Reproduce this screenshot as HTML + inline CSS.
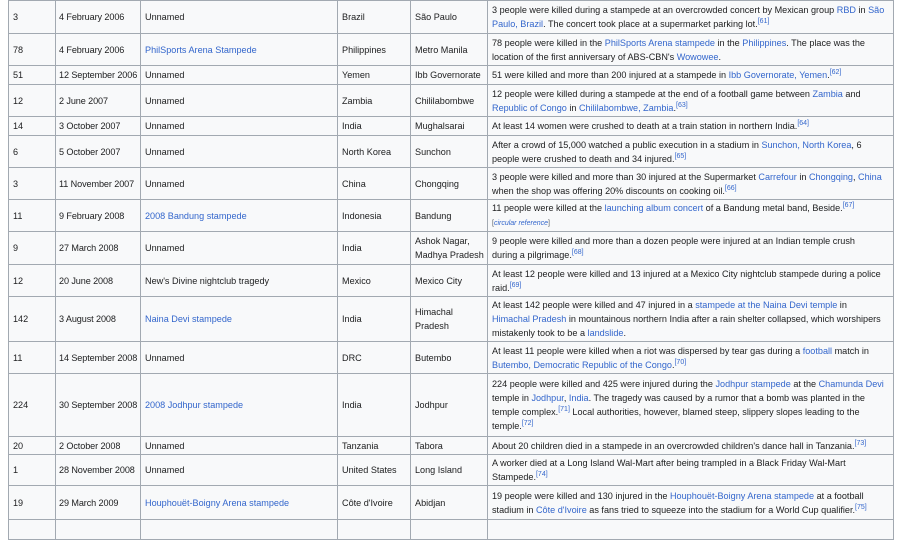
<!DOCTYPE html>
<html><head><meta charset="utf-8"><style>
body{margin:0;background:#fff;width:900px;height:522px;overflow:hidden;font-family:"Liberation Sans","Noto Sans CJK KR",sans-serif;font-size:9.1px;color:#202122}
table{position:absolute;left:8px;top:0;width:885px;border-collapse:collapse;table-layout:fixed;background:#f8f9fa}
td{border:1px solid #a2a9b1;padding:0 2px 0 4px;line-height:14px;white-space:nowrap;overflow:hidden;vertical-align:middle}
td:nth-child(2){padding:0 0 0 3px;letter-spacing:-0.1px}
a{color:#3366cc;text-decoration:none}
sup{font-size:7px;line-height:0;vertical-align:4px;color:#3366cc}
.cr{font-size:7px;color:#54595d}
</style></head><body>
<table>
<colgroup><col style="width:47px"><col style="width:85px"><col style="width:197px"><col style="width:73px"><col style="width:77px"><col style="width:406px"></colgroup>
<tr style="height:33px"><td>3</td><td>4 February 2006</td><td>Unnamed</td><td>Brazil</td><td>São Paulo</td><td>3 people were killed during a stampede at an overcrowded concert by Mexican group <a>RBD</a> in <a>São</a><br><a>Paulo, Brazil</a>. The concert took place at a supermarket parking lot.<sup>[61]</sup></td></tr>
<tr style="height:32px"><td>78</td><td>4 February 2006</td><td><a>PhilSports Arena Stampede</a></td><td>Philippines</td><td>Metro Manila</td><td>78 people were killed in the <a>PhilSports Arena stampede</a> in the <a>Philippines</a>. The place was the<br>location of the first anniversary of ABS-CBN's <a>Wowowee</a>.</td></tr>
<tr style="height:19px"><td>51</td><td>12 September 2006</td><td>Unnamed</td><td>Yemen</td><td>Ibb Governorate</td><td>51 were killed and more than 200 injured at a stampede in <a>Ibb Governorate, Yemen</a>.<sup>[62]</sup></td></tr>
<tr style="height:32px"><td>12</td><td>2 June 2007</td><td>Unnamed</td><td>Zambia</td><td>Chililabombwe</td><td>12 people were killed during a stampede at the end of a football game between <a>Zambia</a> and<br><a>Republic of Congo</a> in <a>Chililabombwe, Zambia</a>.<sup>[63]</sup></td></tr>
<tr style="height:19px"><td>14</td><td>3 October 2007</td><td>Unnamed</td><td>India</td><td>Mughalsarai</td><td>At least 14 women were crushed to death at a train station in northern India.<sup>[64]</sup></td></tr>
<tr style="height:32px"><td>6</td><td>5 October 2007</td><td>Unnamed</td><td>North Korea</td><td>Sunchon</td><td>After a crowd of 15,000 watched a public execution in a stadium in <a>Sunchon, North Korea</a>, 6<br>people were crushed to death and 34 injured.<sup>[65]</sup></td></tr>
<tr style="height:32px"><td>3</td><td>11 November 2007</td><td>Unnamed</td><td>China</td><td>Chongqing</td><td>3 people were killed and more than 30 injured at the Supermarket <a>Carrefour</a> in <a>Chongqing</a>, <a>China</a><br>when the shop was offering 20% discounts on cooking oil.<sup>[66]</sup></td></tr>
<tr style="height:32px"><td>11</td><td>9 February 2008</td><td><a>2008 Bandung stampede</a></td><td>Indonesia</td><td>Bandung</td><td>11 people were killed at the <a>launching album concert</a> of a Bandung metal band, Beside.<sup>[67]</sup><br><span class="cr">[<i><a>circular reference</a></i>]</span></td></tr>
<tr style="height:33px"><td>9</td><td>27 March 2008</td><td>Unnamed</td><td>India</td><td>Ashok Nagar,<br>Madhya Pradesh</td><td>9 people were killed and more than a dozen people were injured at an Indian temple crush<br>during a pilgrimage.<sup>[68]</sup></td></tr>
<tr style="height:32px"><td>12</td><td>20 June 2008</td><td>New's Divine nightclub tragedy</td><td>Mexico</td><td>Mexico City</td><td>At least 12 people were killed and 13 injured at a Mexico City nightclub stampede during a police<br>raid.<sup>[69]</sup></td></tr>
<tr style="height:45px"><td>142</td><td>3 August 2008</td><td><a>Naina Devi stampede</a></td><td>India</td><td>Himachal<br>Pradesh</td><td>At least 142 people were killed and 47 injured in a <a>stampede at the Naina Devi temple</a> in<br><a>Himachal Pradesh</a> in mountainous northern India after a rain shelter collapsed, which worshipers<br>mistakenly took to be a <a>landslide</a>.</td></tr>
<tr style="height:32px"><td>11</td><td>14 September 2008</td><td>Unnamed</td><td>DRC</td><td>Butembo</td><td>At least 11 people were killed when a riot was dispersed by tear gas during a <a>football</a> match in<br><a>Butembo, Democratic Republic of the Congo</a>.<sup>[70]</sup></td></tr>
<tr style="height:63px"><td>224</td><td>30 September 2008</td><td><a>2008 Jodhpur stampede</a></td><td>India</td><td>Jodhpur</td><td>224 people were killed and 425 were injured during the <a>Jodhpur stampede</a> at the <a>Chamunda Devi</a><br>temple in <a>Jodhpur</a>, <a>India</a>. The tragedy was caused by a rumor that a bomb was planted in the<br>temple complex.<sup>[71]</sup> Local authorities, however, blamed steep, slippery slopes leading to the<br>temple.<sup>[72]</sup></td></tr>
<tr style="height:18px"><td>20</td><td>2 October 2008</td><td>Unnamed</td><td>Tanzania</td><td>Tabora</td><td>About 20 children died in a stampede in an overcrowded children's dance hall in Tanzania.<sup>[73]</sup></td></tr>
<tr style="height:31px"><td>1</td><td>28 November 2008</td><td>Unnamed</td><td>United States</td><td>Long Island</td><td>A worker died at a Long Island Wal-Mart after being trampled in a Black Friday Wal-Mart<br>Stampede.<sup>[74]</sup></td></tr>
<tr style="height:34px"><td>19</td><td>29 March 2009</td><td><a>Houphouët-Boigny Arena stampede</a></td><td>Côte d'Ivoire</td><td>Abidjan</td><td>19 people were killed and 130 injured in the <a>Houphouët-Boigny Arena stampede</a> at a football<br>stadium in <a>Côte d'Ivoire</a> as fans tried to squeeze into the stadium for a World Cup qualifier.<sup>[75]</sup></td></tr>
<tr style="height:20px"><td></td><td></td><td></td><td></td><td></td><td></td></tr>
</table>
</body></html>
